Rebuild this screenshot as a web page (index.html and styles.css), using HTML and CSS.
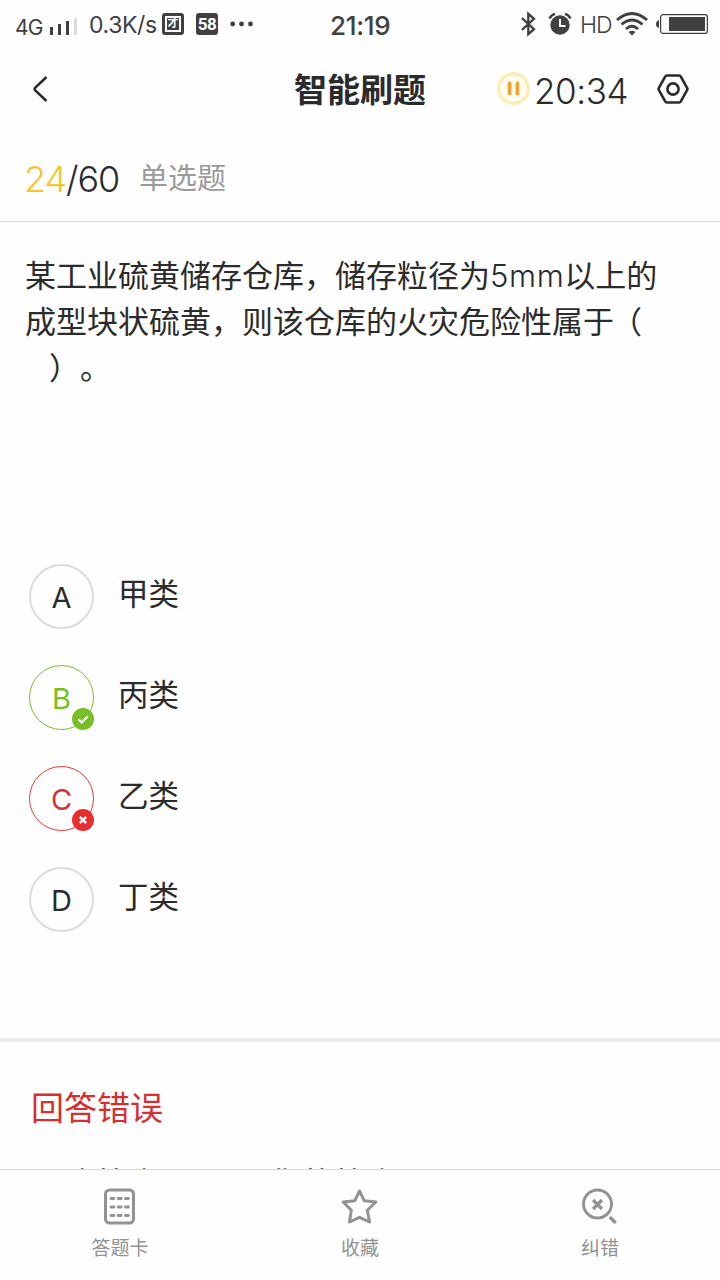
FILE: index.html
```html
<!DOCTYPE html>
<html lang="zh-CN">
<head>
<meta charset="utf-8">
<title>智能刷题</title>
<link rel="stylesheet" href="styles.css">
</head>
<body>
<div class="screen">
  <div class="status">
    <span class="net">4G</span>
    <svg class="signal" width="28" height="19" viewBox="0 0 28 19"><path fill="#404040" d="M0 10h3v8H0zM8 7h3v11H8zM16 4h3v14h-3z"/><path fill="#dcdcdc" d="M24 1h3v17h-3z"/></svg>
    <span class="speed">0.3K/s</span>
    <span class="app app-tuan"><span class="app-frame">才</span></span>
    <span class="app app-58">58</span>
    <svg class="more" width="24" height="6" viewBox="0 0 24 6"><g fill="#404040"><circle cx="2.7" cy="3" r="2.4"/><circle cx="11.5" cy="3" r="2.4"/><circle cx="20.5" cy="3" r="2.4"/></g></svg>
    <span class="clock">21:19</span>
    <svg class="bt" width="18" height="26" viewBox="0 0 18 26"><path d="M2 7.200l12 11L8.300 23.200V2.800L14 7.800l-12 11" fill="none" stroke="#404040" stroke-width="2.300"/></svg>
    <svg class="alarm" width="24" height="24" viewBox="0 0 24 24"><circle cx="12" cy="13" r="9.700" fill="#404040"/><path d="M1.500 6.500Q3 3 7 1.800M22.500 6.500Q21 3 17 1.800" fill="none" stroke="#404040" stroke-width="2.400"/><path d="M12 7v7h5.500" fill="none" stroke="#fff" stroke-width="2"/></svg>
    <span class="hd">HD</span>
    <svg class="wifi" width="32" height="24" viewBox="0 0 32 24"><g fill="none" stroke="#404040" stroke-width="2.800"><path d="M1 8Q16-5 31 8"/><path d="M5.500 12.500Q16 3.500 26.500 12.500"/><path d="M10 17Q16 11.500 22 17"/></g><path fill="#404040" d="M12.500 20Q16 17.300 19.500 20L16 23.500z"/></svg>
    <svg class="battery" width="52" height="20" viewBox="0 0 52 20"><path fill="#404040" d="M3 6v8Q0 13 0 10t3-4zM13 3h36v14H13z"/><rect x="4.600" y=".6" width="46.800" height="18.800" rx="2.500" fill="none" stroke="#404040" stroke-width="1.200"/></svg>
  </div>

  <header class="header">
    <svg class="back" width="16" height="28" viewBox="0 0 16 28"><path d="M14.500 2L3.300 12.600Q2 14 3.300 15.400L14.500 26" fill="none" stroke="#262626" stroke-width="2.500"/></svg>
    <h1 class="title">智能刷题</h1>
    <div class="timer">
      <svg width="34" height="34" viewBox="0 0 34 34"><circle cx="16.500" cy="16.500" r="14.800" fill="#fffdf3" stroke="#fbedb5" stroke-width="3.400"/><path d="M12.600 11.500v10M20.400 11.500v10" stroke="#eda52f" stroke-width="3.800" stroke-linecap="round"/></svg>
      <span class="time">20:34</span>
    </div>
    <svg class="settings" width="32" height="30" viewBox="0 0 32 30"><path d="M9.800 1.500h12.400q1 0 1.500 1l6.500 11.500q.5 1 0 2l-6.500 11.500q-.5 1-1.500 1H9.800q-1 0-1.500-1L1.800 16q-.5-1 0-2L8.300 2.500q.5-1 1.500-1z" fill="none" stroke="#2b2b2b" stroke-width="2.600"/><circle cx="16" cy="15" r="5.600" fill="none" stroke="#2b2b2b" stroke-width="2.600"/></svg>
  </header>

  <div class="meta">
    <span class="count"><span class="current">24</span>/60</span>
    <span class="kind">单选题</span>
  </div>

  <main class="question">
    <p class="stem">某工业硫黄储存仓库，储存粒径为<span class="latin">5mm</span>以上的<br>成型块状硫黄，则该仓库的火灾危险性属于<span class="open">（</span><br><span class="close">）。</span></p>
    <ul class="options">
      <li class="option"><span class="mark">A</span><span class="label">甲类</span></li>
      <li class="option"><span class="mark right">B<svg class="badge" width="22" height="22" viewBox="0 0 22 22"><circle cx="11" cy="11" r="11" fill="#78be25"/><path d="M6.500 11.300l3.200 3.200 6-6" fill="none" stroke="#fff" stroke-width="2"/></svg></span><span class="label">丙类</span></li>
      <li class="option"><span class="mark wrong">C<svg class="badge" width="22" height="22" viewBox="0 0 22 22"><circle cx="11" cy="11" r="11" fill="#e62e2e"/><path d="M7.800 7.800l6.400 6.400M14.200 7.800l-6.400 6.400" fill="none" stroke="#fff" stroke-width="2.400"/></svg></span><span class="label">乙类</span></li>
      <li class="option"><span class="mark">D</span><span class="label">丁类</span></li>
    </ul>
  </main>

  <section class="result">
    <h2 class="verdict">回答错误</h2>
    <div class="answers"><span class="answer">正确答案</span><span class="answer">您的答案</span></div>
  </section>

  <nav class="tabs">
    <div class="tab">
      <svg width="36" height="38" viewBox="0 0 36 38"><rect x="3.500" y="3" width="28" height="33" rx="4" fill="none" stroke="#929292" stroke-width="3"/><path d="M9 11.500h3M16.200 11.500h3M23.400 11.500h3M9 20h3M16.200 20h3M23.400 20h3M9 28.500h3M16.200 28.500h3M23.400 28.500h3" stroke="#929292" stroke-width="2.800" stroke-linecap="round"/></svg>
      <span>答题卡</span>
    </div>
    <div class="tab">
      <svg width="38" height="38" viewBox="0 0 38 38"><path d="M18.500 4l4.800 9.800 11.500 1.200-8.500 8.300 2.300 11.700-10.100-4.700L8.500 35l1.800-11.700L2.200 15l11.500-1.200z" fill="none" stroke="#929292" stroke-width="3" stroke-linejoin="round"/></svg>
      <span>收藏</span>
    </div>
    <div class="tab">
      <svg width="36" height="38" viewBox="0 0 36 38"><g fill="none" stroke="#929292" stroke-width="2.900"><circle cx="15.500" cy="17" r="14"/><path d="M11 13l9 9M20 13l-9 9M27.700 30l6 6" stroke-width="3.200"/></g></svg>
      <span>纠错</span>
    </div>
  </nav>
</div>
</body>
</html>
```
FILE: styles.css
```css
* { box-sizing: border-box; }
body, h1, h2, p, ul { margin: 0; padding: 0; }
body {
  background: #fff;
  color: #2b2b2b;
  font-family: Inter, "Noto Sans CJK SC", sans-serif;
  text-spacing-trim: space-all;
}
svg { display: block; flex: none; }
.screen {
  width: 720px;
  height: 1280px;
  display: flex;
  flex-direction: column;
  overflow: hidden;
  background: #fefefe;
}

.status {
  height: 50px;
  flex: none;
  display: flex;
  align-items: center;
  color: #404040;
  padding: 0 12px 2px 15px;
  white-space: nowrap;
}
.net { width: 28px; font-size: 21px; letter-spacing: -0.8px; padding-top: 6px; }
.signal { margin: 4px 0 0 7px; }
.speed { width: 73px; margin-left: 11px; font-size: 23px; padding-top: 2px; letter-spacing: -0.4px; }
.app {
  width: 22px;
  height: 22px;
  flex: none;
  border-radius: 3px;
  background: #404040;
  color: #fff;
  display: flex;
  align-items: center;
  justify-content: center;
  font-weight: 700;
}
.app-tuan { padding: 3px; }
.app-frame {
  width: 16px;
  height: 16px;
  border: 2px solid #fff;
  font-size: 11px;
  line-height: 11px;
  text-align: center;
}
.app-58 { margin-left: 12px; font-family: Roboto, sans-serif; font-size: 17px; letter-spacing: -0.5px; }
.more { margin-left: 12px; }
.clock { width: 64px; margin-left: 76px; font-size: 26px; font-weight: 500; padding-top: 3px; letter-spacing: -0.3px; }
.bt { margin-left: 126px; }
.alarm { margin-left: 10px; }
.hd { width: 32px; margin-left: 8px; font-size: 23px; font-weight: 300; padding-top: 2px; letter-spacing: -1px; }
.wifi { margin-left: 4px; }
.battery { margin-left: auto; }

.header {
  height: 78px;
  flex: none;
  display: flex;
  align-items: center;
  padding: 0 31px 0 32px;
}
.title { width: 136px; margin-left: 246px; padding-top: 1px; font-size: 33px; line-height: 48px; font-weight: 700; white-space: nowrap; }
.timer { display: flex; align-items: center; gap: 3px; margin-left: 67px; }
.time { font-size: 35px; line-height: 40px; padding-top: 4px; letter-spacing: -0.4px; font-weight: 300; }
.settings { margin-left: auto; }

.meta {
  height: 94px;
  flex: none;
  display: flex;
  align-items: center;
  gap: 20px;
  padding: 8px 24px 0;
  border-bottom: 1px solid #dadada;
}
.count { width: 95px; font-size: 36px; font-weight: 300; letter-spacing: -1.1px; white-space: nowrap; }
.current { color: #f3c633; }
.kind { font-size: 29px; line-height: 40px; color: #9a9a9a; }

.question { height: 816px; flex: none; padding: 31px 24px 0 25px; }
.stem { height: 310px; font-size: 31px; line-height: 46px; white-space: nowrap; }
.latin { font-weight: 300; letter-spacing: 0.6px; }
.open { margin-left: -3px; }
.close { padding-left: 24px; }
.options { list-style: none; display: flex; flex-direction: column; gap: 35px; padding-left: 4px; }
.option { display: flex; align-items: center; gap: 24px; height: 66px; }
.mark {
  position: relative;
  width: 65px;
  height: 65px;
  border: 2px solid #dcdcdc;
  border-radius: 50%;
  display: flex;
  align-items: center;
  justify-content: center;
  padding-top: 2px;
  font-size: 29px;
}
.right { color: #78be25; border: 1px solid #78be25; }
.wrong { color: #d52f2f; border: 1px solid #e13b3b; }
.badge { position: absolute; right: -1px; bottom: -1px; }
.label { font-size: 30.5px; line-height: 46px; padding-bottom: 4px; }

.result { flex: 1; min-height: 0; overflow: hidden; border-top: 4px solid #ececec; padding: 42px 31px 0; }
.verdict { font-size: 33px; line-height: 48px; font-weight: 400; color: #d52f2f; }
.answers { display: flex; margin-top: 29px; font-size: 32.5px; line-height: 48px; color: #555; }
.answer { width: 238px; }

.tabs { height: 111px; flex: none; display: flex; border-top: 1px solid #d8d8d8; }
.tab { flex: 1; display: flex; flex-direction: column; align-items: center; padding-top: 17px; font-size: 19px; line-height: 28px; color: #929292; gap: 10px; }
```
